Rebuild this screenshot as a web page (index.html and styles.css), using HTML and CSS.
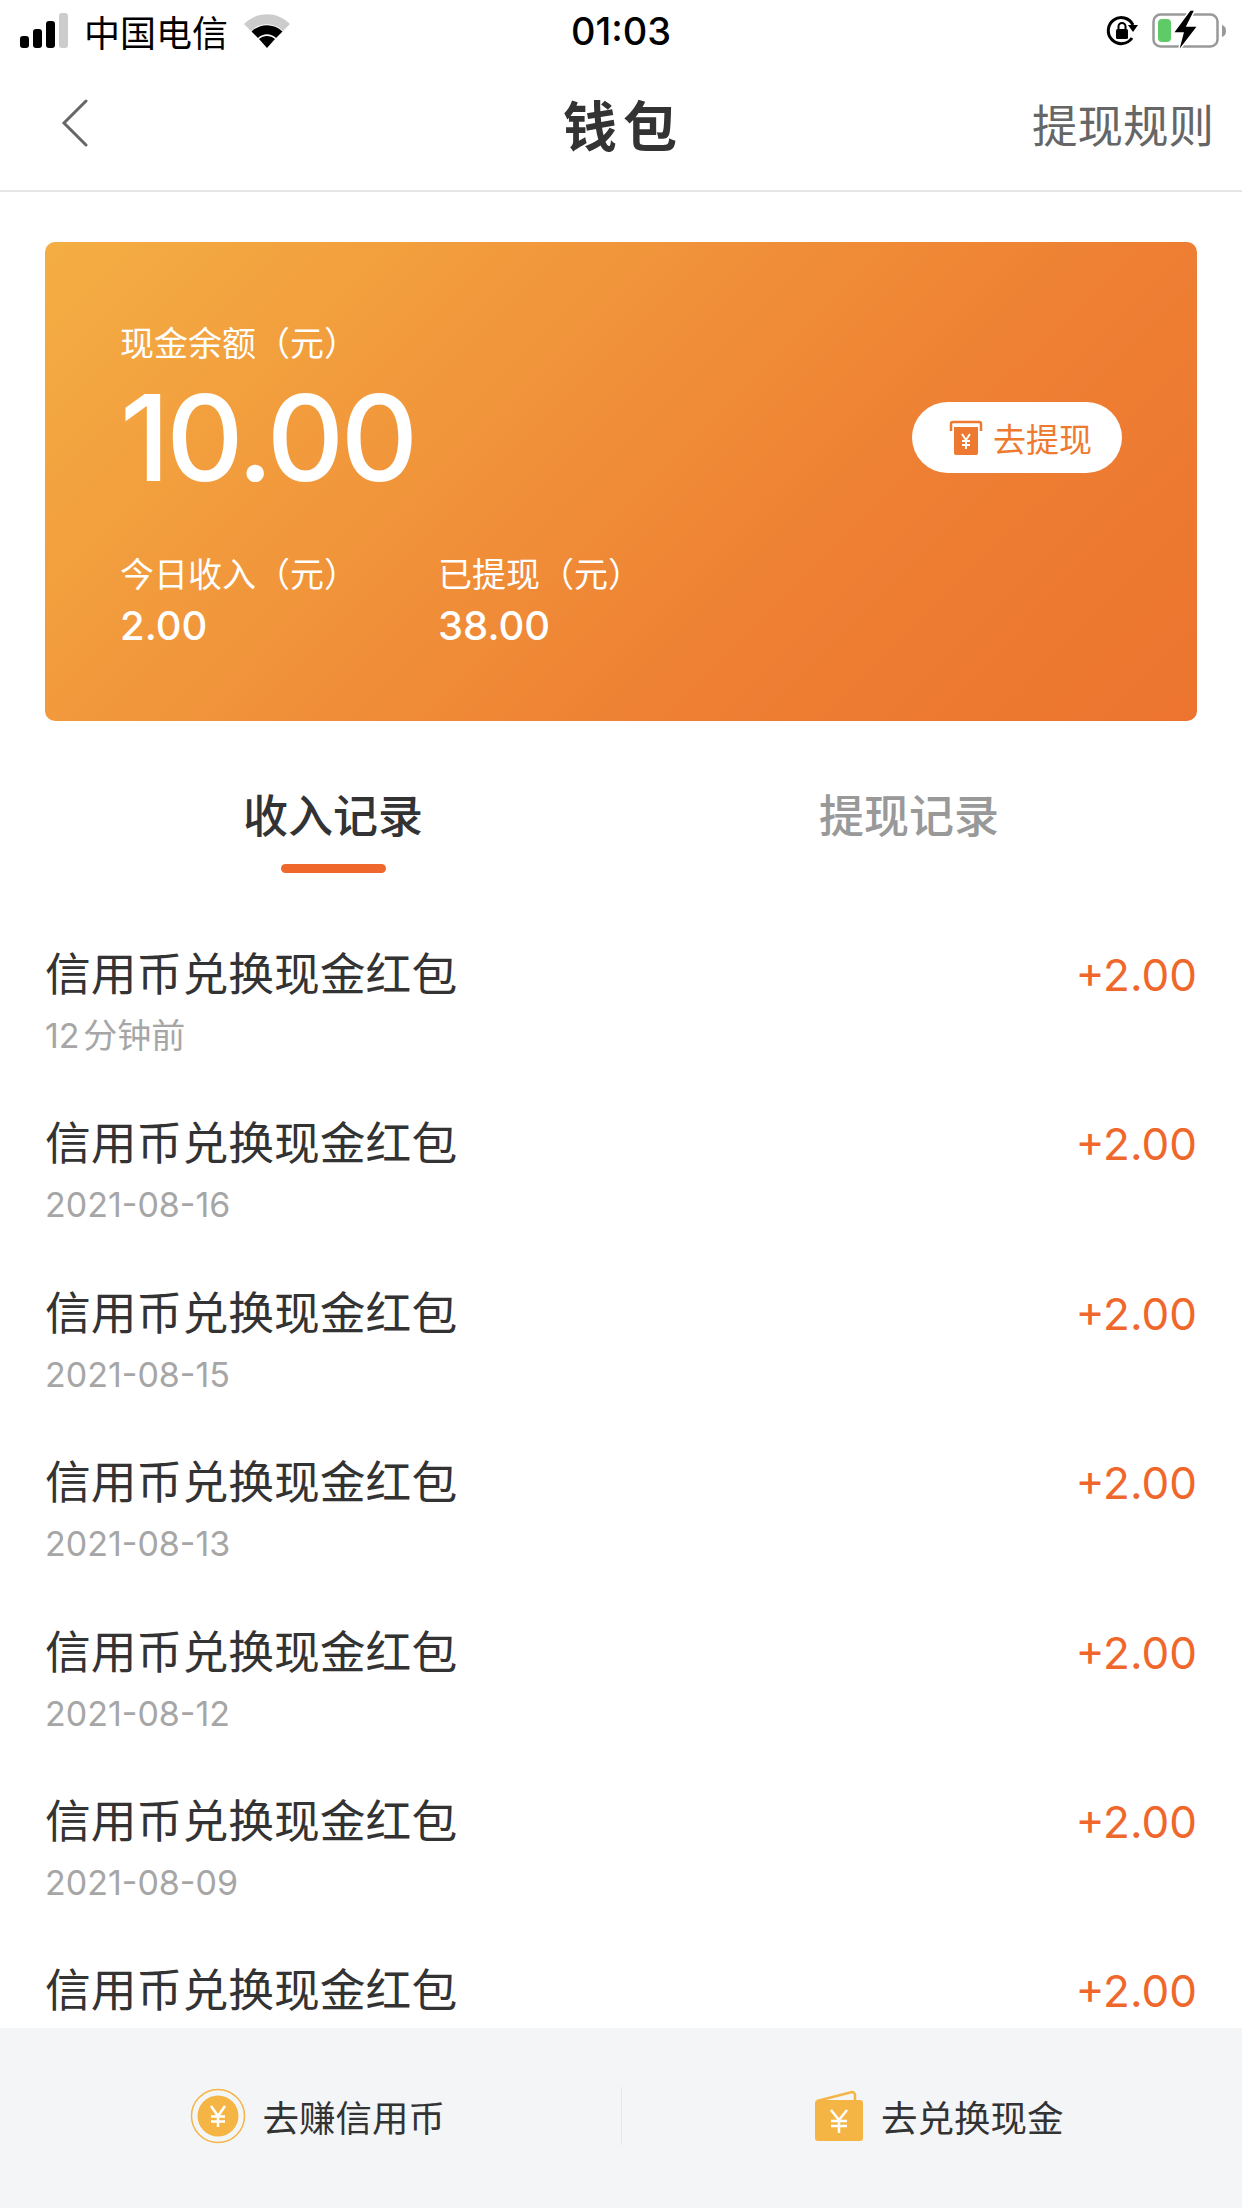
FILE: index.html
```html
<!DOCTYPE html>
<html lang="zh-CN">

<head>
    <meta charset="UTF-8">
    <meta name="viewport" content="width=device-width, initial-scale=1.0">
    <title>钱包</title>
    <link rel="stylesheet" href="styles.css">
</head>

<body>
    <div class="page">

        <!-- Status bar -->
        <div class="status-bar">
            <div class="status-left">
                <svg class="signal" width="50" height="36" viewBox="0 0 50 36">
                    <rect x="0" y="23" width="9" height="12" rx="3" fill="#000" />
                    <rect x="13" y="16" width="9" height="19" rx="3" fill="#000" />
                    <rect x="26" y="8" width="9" height="27" rx="3" fill="#000" />
                    <rect x="39" y="0" width="9" height="35" rx="3" fill="#ccc" />
                </svg>
                <span class="carrier">中国电信</span>
                <svg class="wifi" width="48" height="36" viewBox="0 0 48 36">
                    <path d="M1 11 C14 -2 34 -2 47 11 L40 18 C31 9 17 9 8 18 Z" fill="#ccc" />
                    <path d="M8.500 18.500 C17 10 31 10 39.500 18.500 L33 25 C28 20 20 20 15 25 Z" fill="#000" />
                    <path d="M16 26 C20.500 22 27.500 22 32 26 L24 35 Z" fill="#000" />
                </svg>
            </div>
            <div class="status-time">01:03</div>
            <div class="status-right">
                <svg width="34" height="34" viewBox="0 0 34 34">
                    <path d="M27 24 A13 13 0 1 1 28 11" fill="none" stroke="#000" stroke-width="3" />
                    <path d="M23 11 L33 11 L28 18 Z" fill="#000" />
                    <rect x="11" y="15" width="12" height="10" rx="1.500" fill="#000" />
                    <path d="M13.500 15 V12.500 A3.500 3.500 0 0 1 20.500 12.500 V15" fill="none" stroke="#000" stroke-width="2" />
                </svg>
                <svg width="76" height="42" viewBox="0 0 76 42">
                    <rect x="1.500" y="4.500" width="64" height="32" rx="7" fill="none" stroke="#999" stroke-width="2.500" />
                    <path d="M70 15 C73 16 74 18 74 21 C74 24 73 26 70 27 Z" fill="#999" />
                    <rect x="6" y="9" width="13" height="23" rx="4" fill="#5fcb66" />
                    <path d="M38 0 L21 23 L31 23 L26 42 L46 16 L35 16 L43 0 Z" fill="#000" stroke="#fff" stroke-width="1.500" />
                </svg>
            </div>
        </div>

        <!-- Nav bar -->
        <div class="nav-bar">
            <div class="nav-back">
                <svg width="28" height="48" viewBox="0 0 28 48">
                    <path d="M25 2 L3 24 L25 46" fill="none" stroke="#666" stroke-width="3" stroke-linecap="round" />
                </svg>
            </div>
            <div class="nav-title">钱包</div>
            <div class="nav-rule">提现规则</div>
        </div>

        <!-- Balance card -->
        <div class="card">
            <div class="card-main">
                <div class="card-label">现金余额（元）</div>
                <div class="card-balance">10.00</div>
                <div class="card-stats">
                    <div class="stat">
                        <div class="card-label">今日收入（元）</div>
                        <div class="stat-value">2.00</div>
                    </div>
                    <div class="stat">
                        <div class="card-label">已提现（元）</div>
                        <div class="stat-value">38.00</div>
                    </div>
                </div>
            </div>
            <div class="withdraw-btn">
                <svg width="34" height="36" viewBox="0 0 34 36">
                    <path d="M2 11 V4 A2 2 0 0 1 4 2 H30 A2 2 0 0 1 32 4 V11" fill="none" stroke="#ee7a32" stroke-width="2.500" />
                    <path d="M5 7 H29 V33 A2 2 0 0 1 27 35 H7 A2 2 0 0 1 5 33 Z" fill="#ee7a32" />
                    <path d="M13 14 L17 20 L21 14 M17 20 V29 M13 21 H21 M13 25 H21" fill="none" stroke="#fff" stroke-width="2" />
                </svg>
                <span>去提现</span>
            </div>
        </div>

        <!-- Tabs -->
        <div class="tabs">
            <div class="tab tab-active">
                <span>收入记录</span>
                <i class="tab-line"></i>
            </div>
            <div class="tab">
                <span>提现记录</span>
            </div>
        </div>

        <!-- Records -->
        <div class="records">
            <div class="record">
                <div>
                    <div class="record-title">信用币兑换现金红包</div>
                    <div class="record-date record-date-text">12 分钟前</div>
                </div>
                <div class="record-amount">+2.00</div>
            </div>
            <div class="record">
                <div>
                    <div class="record-title">信用币兑换现金红包</div>
                    <div class="record-date">2021-08-16</div>
                </div>
                <div class="record-amount">+2.00</div>
            </div>
            <div class="record">
                <div>
                    <div class="record-title">信用币兑换现金红包</div>
                    <div class="record-date">2021-08-15</div>
                </div>
                <div class="record-amount">+2.00</div>
            </div>
            <div class="record">
                <div>
                    <div class="record-title">信用币兑换现金红包</div>
                    <div class="record-date">2021-08-13</div>
                </div>
                <div class="record-amount">+2.00</div>
            </div>
            <div class="record">
                <div>
                    <div class="record-title">信用币兑换现金红包</div>
                    <div class="record-date">2021-08-12</div>
                </div>
                <div class="record-amount">+2.00</div>
            </div>
            <div class="record">
                <div>
                    <div class="record-title">信用币兑换现金红包</div>
                    <div class="record-date">2021-08-09</div>
                </div>
                <div class="record-amount">+2.00</div>
            </div>
            <div class="record">
                <div>
                    <div class="record-title">信用币兑换现金红包</div>
                </div>
                <div class="record-amount">+2.00</div>
            </div>
        </div>

        <!-- Bottom bar -->
        <div class="bottom-bar">
            <div class="bottom-item">
                <svg width="56" height="56" viewBox="0 0 56 56">
                    <circle cx="28" cy="28" r="26.500" fill="none" stroke="#f5b545" stroke-width="1.500" />
                    <circle cx="28" cy="28" r="20.500" fill="#f5b545" />
                    <path d="M21 18 L28 28 L35 18 M28 28 V39 M21 28.500 H35 M21 33.500 H35" fill="none" stroke="#fff" stroke-width="2.500" />
                </svg>
                <span>去赚信用币</span>
            </div>
            <i class="bottom-divider"></i>
            <div class="bottom-item">
                <svg width="50" height="52" viewBox="0 0 50 52">
                    <path d="M3 11 L38 2 A3 3 0 0 1 41 5 V10" fill="none" stroke="#f5b545" stroke-width="2.500" />
                    <rect x="1" y="10" width="48" height="41" rx="3" fill="#f5b545" />
                    <path d="M17 20 L25 30 L33 20 M25 30 V43 M17 31 H33 M17 36 H33" fill="none" stroke="#fff" stroke-width="2.500" />
                </svg>
                <span>去兑换现金</span>
            </div>
        </div>

    </div>
</body>

</html>
```

FILE: styles.css
```css
* {
    box-sizing: border-box;
}

body {
    margin: 0;
    background: #fff;
    font-family: Inter, "Noto Sans CJK SC", sans-serif;
}

.page {
    display: flex;
    flex-direction: column;
    width: 1242px;
    height: 2208px;
    overflow: hidden;
}

/* Status bar */
.status-bar {
    display: flex;
    align-items: center;
    justify-content: space-between;
    height: 62px;
    padding: 0 14px 0 20px;
    color: #000;
}

.status-left {
    display: flex;
    align-items: center;
    width: 300px;
}

.carrier {
    margin-left: 14px;
    font-size: 36px;
}

.wifi {
    margin-left: 15px;
}

.status-time {
    font-size: 38px;
    font-weight: 500;
}

.status-right {
    display: flex;
    align-items: center;
    justify-content: flex-end;
    gap: 13px;
    width: 306px;
}

/* Nav bar */
.nav-bar {
    display: flex;
    align-items: center;
    justify-content: space-between;
    height: 130px;
    padding: 0 28px 6px 61px;
    border-bottom: 2px solid #e5e5e5;
}

.nav-back {
    display: flex;
    width: 153px;
}

.nav-title {
    font-size: 54px;
    font-weight: 700;
    letter-spacing: 6px;
    color: #333;
}

.nav-rule {
    width: 182px;
    font-size: 45.500px;
    color: #666;
    white-space: nowrap;
}

/* Balance card */
.card {
    display: flex;
    align-items: flex-start;
    justify-content: space-between;
    height: 479px;
    margin: 50px 45px 0;
    padding: 78px 75px 0 75px;
    border-radius: 10px;
    background: linear-gradient(135deg, #f4ae43 0%, #ee7f33 68%, #ec742e 100%);
    color: #fff;
}

.card-label {
    font-size: 34px;
    line-height: 48px;
    white-space: nowrap;
}

.card-balance {
    margin-top: 3px;
    font-size: 120px;
    font-weight: 500;
    line-height: 134px;
    letter-spacing: -3.500px;
}

.card-stats {
    display: flex;
    margin-top: 46px;
}

.stat {
    width: 318px;
}

.stat-value {
    margin-top: 1px;
    font-size: 40px;
    font-weight: 500;
    line-height: 52px;
}

.withdraw-btn {
    display: flex;
    align-items: center;
    gap: 10px;
    height: 71px;
    margin-top: 82px;
    padding: 0 30px 0 37px;
    border-radius: 36px;
    background: #fff;
    color: #ee7a32;
    font-size: 33px;
    white-space: nowrap;
}

/* Tabs */
.tabs {
    display: flex;
    height: 153px;
    margin: 0 45px;
}

.tab {
    display: flex;
    flex-direction: column;
    align-items: center;
    flex: 1;
    padding-top: 66px;
    color: #999;
    font-size: 45px;
    font-weight: 500;
    line-height: 60px;
}

.tab-active {
    color: #333;
}

.tab-line {
    width: 105px;
    height: 9px;
    margin-top: 17px;
    border-radius: 5px;
    background: #f0672c;
}

/* Records */
.records {
    flex: 1;
    min-height: 0;
    padding-top: 44px;
    overflow: hidden;
}

.record {
    display: flex;
    align-items: flex-start;
    justify-content: space-between;
    height: 169.400px;
    padding: 0 45px;
}

.record-title {
    margin-top: 26px;
    color: #333;
    font-size: 45.800px;
    line-height: 62px;
}

.record-date {
    margin-top: 8px;
    color: #a6a6a6;
    font-size: 34px;
    line-height: 44px;
}

.record-date-text {
    word-spacing: -6px;
}

.record-amount {
    margin-top: 26px;
    color: #f0672c;
    font-size: 44px;
    line-height: 62px;
}

/* Bottom bar */
.bottom-bar {
    display: flex;
    align-items: center;
    flex-shrink: 0;
    height: 180px;
    padding-bottom: 4px;
    background: #f4f5f7;
}

.bottom-item {
    display: flex;
    align-items: center;
    justify-content: center;
    flex: 1;
    gap: 17px;
    padding-left: 14px;
    color: #333;
    font-size: 36.500px;
}

.bottom-divider {
    width: 1px;
    height: 58px;
    background: #e6e6e6;
}
```
